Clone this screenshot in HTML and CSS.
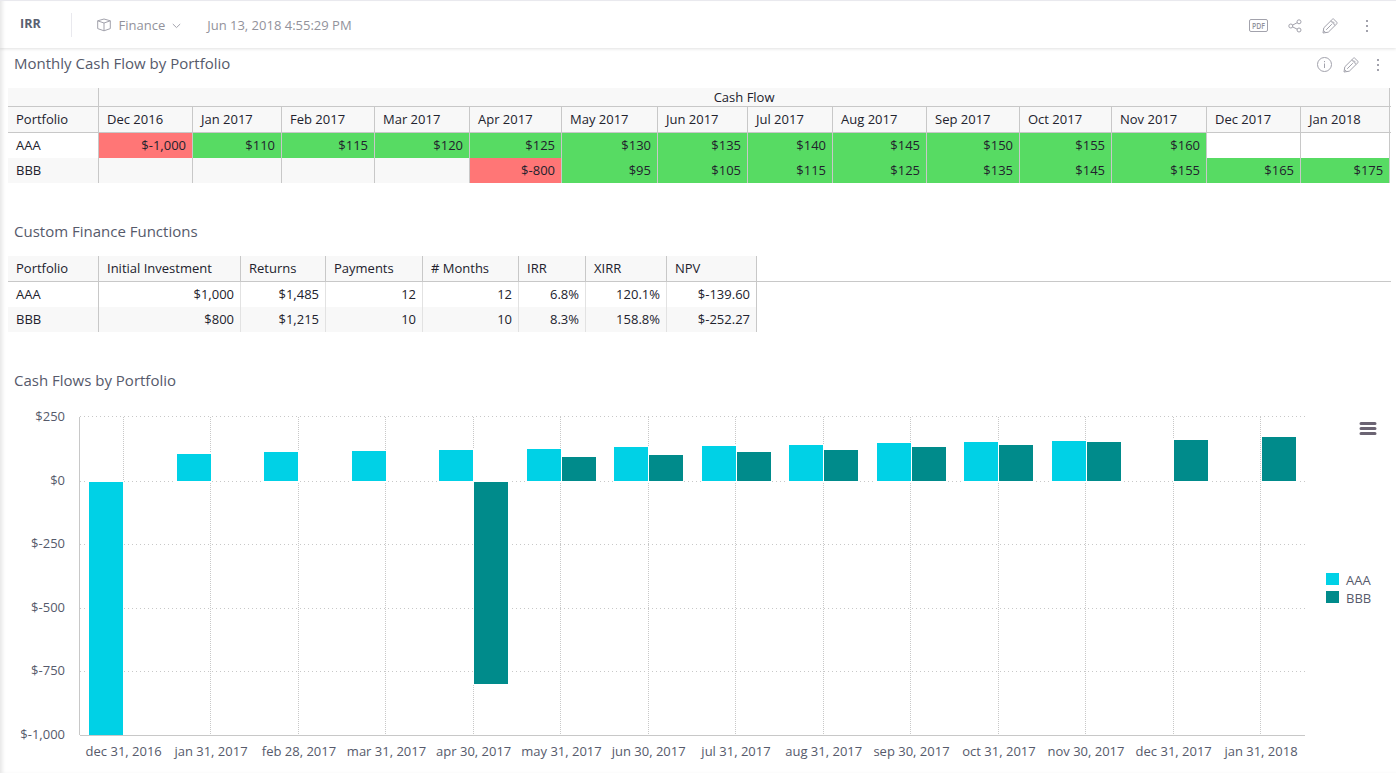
FILE: index.html
```html
<!DOCTYPE html>
<html lang="en">
  <head>
    <meta charset="UTF-8" />
    <meta name="viewport" content="width=device-width, initial-scale=1.0" />
    <title>IRR</title>
    <link rel="stylesheet" href="styles.css">
  </head>
  <body>
    <svg class="sprite" aria-hidden="true">
      <symbol id="pencil" viewBox="0 0 16 16">
        <path d="M1 15l.8-5.200L10.700 1q.4-.4.800 0l3.700 3.600q.4.400 0 .8L6.300 14.200zM8.700 3l4.400 4.400M10.600 3.300l2.100 2.100M4.200 11.800l5.600-5.600M1.500 12.400l2.200 2.200" />
      </symbol>
      <symbol id="dots" viewBox="0 0 4 14">
        <path d="M1 1h2v2H1zM1 6h2v2H1zM1 11h2v2H1z" />
      </symbol>
    </svg>

    <header class="topbar">
      <h1 class="name">IRR</h1>
      <div class="source">
        <svg class="icon cube" viewBox="0 0 14 14">
          <path d="M.7 2.800L7 1l6.300 1.800v7.800L7 12.800.7 10.600zM.7 2.800L7 5l6.300-2.200M7 5v7.800" />
        </svg>
        <span>Finance</span>
        <svg class="icon chevron" viewBox="0 0 9 6"><path d="M.8 1l3.700 3.600L8.200 1" /></svg>
      </div>
      <span class="date">Jun 13, 2018 4:55:29 PM</span>
      <div class="actions">
        <svg class="icon pdf" viewBox="0 0 19 13">
          <rect x=".5" y=".5" width="18" height="12" rx="1.500" />
          <text x="9.500" y="9.700" textLength="13" lengthAdjust="spacingAndGlyphs">PDF</text>
        </svg>
        <svg class="icon share" viewBox="0 0 14 14">
          <circle cx="2.800" cy="7" r="2" />
          <circle cx="11" cy="2.800" r="2" />
          <circle cx="11" cy="11" r="2" />
          <path d="M4.600 6.100l4.600-2.400M4.600 7.900l4.600 2.300" />
        </svg>
        <svg class="icon pencil"><use href="#pencil" /></svg>
        <svg class="dots"><use href="#dots" /></svg>
      </div>
    </header>

    <main>
      <section class="widget monthly">
        <div class="title">
          <h2>Monthly Cash Flow by Portfolio</h2>
          <div class="tools">
            <svg class="icon info" viewBox="0 0 16 16">
              <circle cx="8.500" cy="7.500" r="7" />
              <path d="M8.500 6.500V11M8.500 4v1.200" />
            </svg>
            <svg class="icon pencil"><use href="#pencil" /></svg>
            <svg class="dots"><use href="#dots" /></svg>
          </div>
        </div>
        <div class="table-wrap">
          <table class="grid-table cash">
            <colgroup>
              <col class="w91"><col class="w94"><col class="w89"><col class="w93"><col class="w95">
              <col class="w92"><col class="w96"><col class="w90"><col class="w85"><col class="w94">
              <col class="w93"><col class="w92"><col class="w95"><col class="w94"><col class="w89">
            </colgroup>
            <thead>
              <tr class="group"><th></th><th colspan="14">Cash Flow</th></tr>
              <tr>
                <th>Portfolio</th><th>Dec 2016</th><th>Jan 2017</th><th>Feb 2017</th><th>Mar 2017</th>
                <th>Apr 2017</th><th>May 2017</th><th>Jun 2017</th><th>Jul 2017</th><th>Aug 2017</th>
                <th>Sep 2017</th><th>Oct 2017</th><th>Nov 2017</th><th>Dec 2017</th><th>Jan 2018</th>
              </tr>
            </thead>
            <tbody>
              <tr>
                <td>AAA</td><td class="neg">$-1,000</td><td class="pos">$110</td><td class="pos">$115</td>
                <td class="pos">$120</td><td class="pos">$125</td><td class="pos">$130</td><td class="pos">$135</td>
                <td class="pos">$140</td><td class="pos">$145</td><td class="pos">$150</td><td class="pos">$155</td>
                <td class="pos">$160</td><td></td><td></td>
              </tr>
              <tr>
                <td>BBB</td><td></td><td></td><td></td><td></td><td class="neg">$-800</td>
                <td class="pos">$95</td><td class="pos">$105</td><td class="pos">$115</td><td class="pos">$125</td>
                <td class="pos">$135</td><td class="pos">$145</td><td class="pos">$155</td><td class="pos">$165</td>
                <td class="pos">$175</td>
              </tr>
            </tbody>
          </table>
          <div class="filler"></div>
        </div>
      </section>

      <section class="widget functions">
        <div class="title"><h2>Custom Finance Functions</h2></div>
        <div class="table-wrap">
          <table class="grid-table finance">
            <colgroup>
              <col class="w91"><col class="w142"><col class="w85"><col class="w97">
              <col class="w96"><col class="w67"><col class="w81"><col class="w90">
            </colgroup>
            <thead>
              <tr>
                <th>Portfolio</th><th>Initial Investment</th><th>Returns</th><th>Payments</th>
                <th># Months</th><th>IRR</th><th>XIRR</th><th>NPV</th>
              </tr>
            </thead>
            <tbody>
              <tr>
                <td>AAA</td><td>$1,000</td><td>$1,485</td><td>12</td>
                <td>12</td><td>6.8%</td><td>120.1%</td><td>$-139.60</td>
              </tr>
              <tr>
                <td>BBB</td><td>$800</td><td>$1,215</td><td>10</td>
                <td>10</td><td>8.3%</td><td>158.8%</td><td>$-252.27</td>
              </tr>
            </tbody>
          </table>
          <div class="filler"></div>
        </div>
      </section>

      <section class="widget flows">
        <div class="title"><h2>Cash Flows by Portfolio</h2></div>
        <div class="chart-row">
          <svg class="chart" viewBox="0 400 1312 373">
            <!-- horizontal grid -->
            <path class="grid-h" d="M80 416.500H1305M80 481.500H1305M80 544.500H1305M80 608.500H1305M80 671.500H1305" />
            <!-- vertical grid, one line per month -->
            <path class="grid-v" d="M123.500 417V735M210.500 417V735M298.500 417V735M385.500 417V735M473.500 417V735M560.500 417V735M648.500 417V735M735.500 417V735M823.500 417V735M910.500 417V735M998.500 417V735M1085.500 417V735M1173.500 417V735M1260.500 417V735" />

            <g class="bar aaa">
              <rect x="89" y="482" width="34" height="253" />
              <rect x="177" y="454" width="34" height="27" />
              <rect x="264" y="452" width="34" height="29" />
              <rect x="352" y="451" width="34" height="30" />
              <rect x="439" y="450" width="34" height="31" />
              <rect x="527" y="449" width="34" height="32" />
              <rect x="614" y="447" width="34" height="34" />
              <rect x="702" y="446" width="34" height="35" />
              <rect x="789" y="445" width="34" height="36" />
              <rect x="877" y="443" width="34" height="38" />
              <rect x="964" y="442" width="34" height="39" />
              <rect x="1052" y="441" width="34" height="40" />
            </g>
            <g class="bar bbb">
              <rect x="474" y="482" width="34" height="202" />
              <rect x="562" y="457" width="34" height="24" />
              <rect x="649" y="455" width="34" height="26" />
              <rect x="737" y="452" width="34" height="29" />
              <rect x="824" y="450" width="34" height="31" />
              <rect x="912" y="447" width="34" height="34" />
              <rect x="999" y="445" width="34" height="36" />
              <rect x="1087" y="442" width="34" height="39" />
              <rect x="1174" y="440" width="34" height="41" />
              <rect x="1262" y="437" width="34" height="44" />
            </g>
            <path class="axis" d="M79.500 417V735M80 735.500H1305" />

            <g class="label-y">
              <text x="65" y="421">$250</text>
              <text x="65" y="485">$0</text>
              <text x="65" y="548">$-250</text>
              <text x="65" y="612">$-500</text>
              <text x="65" y="675">$-750</text>
              <text x="65" y="739">$-1,000</text>
            </g>
            <g class="label-x">
              <text x="123.700" y="756">dec 31, 2016</text>
              <text x="211" y="756">jan 31, 2017</text>
              <text x="299" y="756">feb 28, 2017</text>
              <text x="386.500" y="756">mar 31, 2017</text>
              <text x="473.700" y="756">apr 30, 2017</text>
              <text x="561.500" y="756">may 31, 2017</text>
              <text x="648.700" y="756">jun 30, 2017</text>
              <text x="736" y="756">jul 31, 2017</text>
              <text x="823.700" y="756">aug 31, 2017</text>
              <text x="911.500" y="756">sep 30, 2017</text>
              <text x="999" y="756">oct 31, 2017</text>
              <text x="1086" y="756">nov 30, 2017</text>
              <text x="1173.700" y="756">dec 31, 2017</text>
              <text x="1261" y="756">jan 31, 2018</text>
            </g>
          </svg>
          <div class="chart-side">
            <svg class="burger" viewBox="0 0 18 13">
              <path d="M2 1.500h14M2 6.500h14M2 11.500h14" />
            </svg>
            <ul class="legend">
              <li><i class="swatch aaa"></i>AAA</li>
              <li><i class="swatch bbb"></i>BBB</li>
            </ul>
          </div>
        </div>
      </section>
    </main>
  </body>
</html>
```

FILE: styles.css
```css
* {
  box-sizing: border-box;
}

body {
  margin: 0;
  height: 773px;
  overflow: hidden;
  background: #fff;
  color: #22222d;
  font-family: "Open Sans", sans-serif;
  font-size: 13px;
  box-shadow: inset 4px 0 4px -2px #e4e4e4;
}

h1,
h2 {
  margin: 0;
}

.sprite {
  display: none;
}

/* top bar */
.topbar {
  display: flex;
  align-items: center;
  height: 48px;
  padding: 1px 22px 0 20px;
  border-top: 1px solid #e9e9ee;
  box-shadow: 0 1px 3px rgba(0, 0, 0, 0.12);
  color: #92929b;
}

.name {
  width: 52px;
  height: 24px;
  border-right: 1px solid #e9e9ee;
  color: #5a6070;
  font-size: 12.5px;
  line-height: 22px;
}

.source {
  display: flex;
  align-items: center;
  margin-left: 24.5px;
}

.source span,
.date {
  margin-top: -1px;
}

.icon {
  fill: none;
  stroke: #a2a2ac;
  stroke-width: 1;
}

.cube {
  width: 14px;
  height: 14px;
  margin-right: 8px;
}

.chevron {
  width: 9px;
  height: 6px;
  margin: 1px 0 0 7px;
}

.date {
  margin-left: 26px;
}

.actions {
  display: flex;
  align-items: center;
  margin-left: auto;
  padding-top: 1px;
}

.pdf {
  width: 19px;
  height: 13px;
}

.pdf text {
  fill: #92929b;
  stroke: none;
  font-size: 9px;
  font-weight: 600;
  text-anchor: middle;
}

.share {
  width: 14px;
  height: 14px;
  margin-left: 20px;
}

.pencil {
  width: 16px;
  height: 16px;
}

.dots {
  width: 4px;
  height: 14px;
  fill: #a2a2ac;
}

.actions .pencil {
  margin-left: 20px;
}

.actions .dots {
  margin: 0 5px 0 27px;
}

/* widgets */
.monthly {
  height: 168px;
}

.functions {
  height: 149px;
}

.title {
  display: flex;
  align-items: center;
  justify-content: space-between;
  height: 40px;
  padding: 0 16px 10px 14px;
}

.title h2 {
  color: #565a6b;
  font-size: 15px;
  font-weight: 400;
}

.tools {
  display: flex;
  align-items: center;
  padding-top: 3px;
}

.info {
  width: 16px;
  height: 16px;
  margin-right: 11px;
}

.tools .dots {
  margin-left: 17px;
}

/* tables */
.table-wrap {
  display: flex;
  margin: 0 5px 0 8px;
}

.grid-table {
  flex: none;
  table-layout: fixed;
  border-collapse: separate;
  border-spacing: 0;
}

.cash {
  width: 1382px;
}

.finance {
  width: 749px;
}

.w67 { width: 67px; }
.w81 { width: 81px; }
.w85 { width: 85px; }
.w89 { width: 89px; }
.w90 { width: 90px; }
.w91 { width: 91px; }
.w92 { width: 92px; }
.w93 { width: 93px; }
.w94 { width: 94px; }
.w95 { width: 95px; }
.w96 { width: 96px; }
.w97 { width: 97px; }
.w142 { width: 142px; }

.grid-table th {
  height: 26px;
  padding: 0 8px;
  background: #f8f8f8;
  border-right: 1px solid #c8c8c8;
  border-bottom: 1px solid #c8c8c8;
  font-weight: 400;
  line-height: 25px;
  text-align: left;
}

.grid-table .group th {
  height: 19px;
  line-height: 18px;
  text-align: center;
}

.grid-table td {
  height: 25px;
  padding: 0 6px;
  border-right: 1px solid #c8c8c8;
  line-height: 25px;
  text-align: right;
}

.grid-table td:first-child {
  padding-left: 8px;
  text-align: left;
}

.grid-table tbody tr:nth-child(even) {
  background: #f8f8f8;
}

.finance td:not(:first-child):not(:last-child) {
  border-right-color: #e2e2e2;
}

.grid-table .pos {
  background: #57db63;
}

.grid-table .neg {
  background: #ff7676;
}

.filler {
  flex: 1;
  height: 26px;
  border-bottom: 1px solid #c8c8c8;
}

.monthly .filler {
  height: 45px;
  background: linear-gradient(#c8c8c8, #c8c8c8) 0 18px / 100% 1px no-repeat;
}

/* chart */
.chart-row {
  display: flex;
  margin-top: -5px;
}

.chart {
  flex: none;
  width: 1312px;
  height: 373px;
}

.chart path {
  fill: none;
  stroke: #c8c8c8;
}

.chart .grid-h {
  stroke-dasharray: 1 3;
}

.chart .grid-v {
  stroke-dasharray: 1 1;
}

.bar rect {
  stroke: #fff;
  stroke-width: 2px;
  paint-order: stroke;
}

.aaa {
  fill: #00d1e6;
  background: #00d1e6;
}

.bbb {
  fill: #008b8b;
  background: #008b8b;
}

.chart text {
  fill: #565a6b;
  font-size: 13px;
}

.label-y {
  text-anchor: end;
}

.label-x {
  text-anchor: middle;
}

.chart-side {
  width: 84px;
  padding: 22px 0 0 14px;
}

.burger {
  display: block;
  width: 18px;
  height: 13px;
  margin-left: 33px;
  fill: none;
  stroke: #6b6473;
  stroke-width: 3;
  stroke-linecap: round;
}

.legend {
  margin: 136px 0 0;
  padding: 0;
  list-style: none;
  color: #565a6b;
}

.legend li {
  display: flex;
  align-items: center;
  height: 18px;
}

.swatch {
  width: 13px;
  height: 12px;
  margin: -2px 7px 0 0;
}
```
